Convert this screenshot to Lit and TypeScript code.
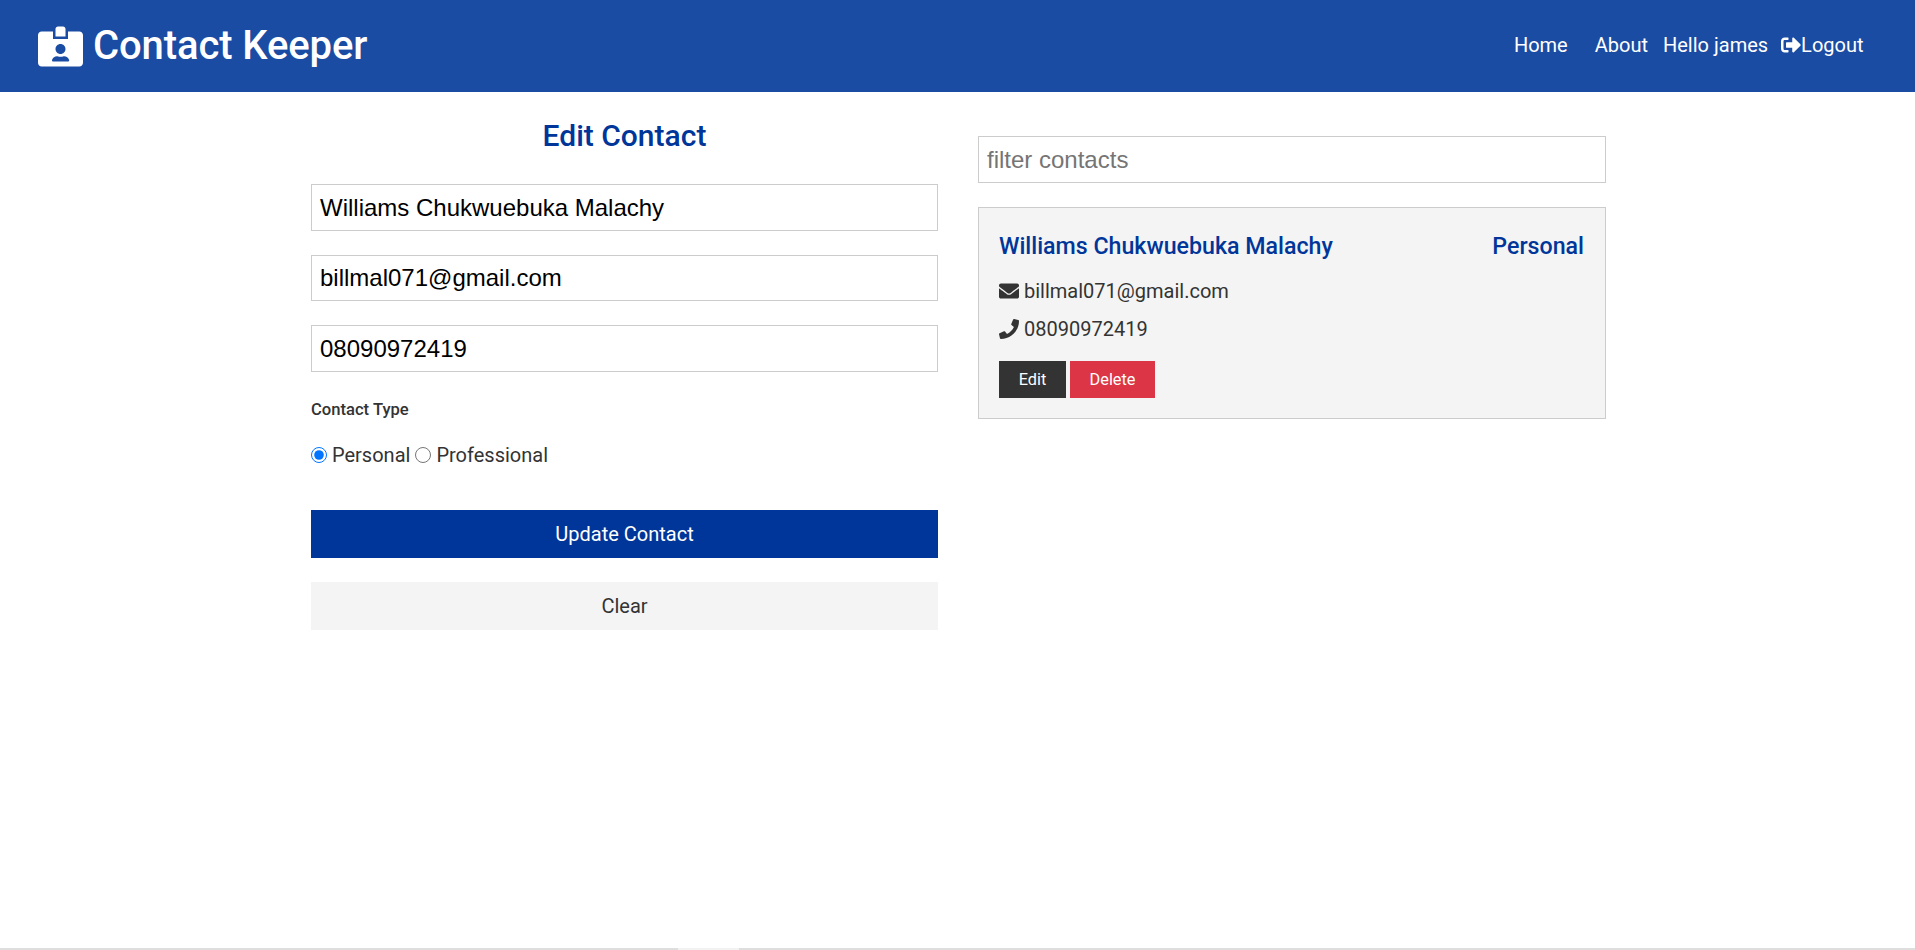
import { LitElement, html, css, svg } from "lit";
import { customElement } from "lit/decorators.js";

const icon = (vb: string, d: string, cls: string) =>
  html`<svg class=${cls} viewBox=${vb} aria-hidden="true">${svg`<path fill="currentColor" d=${d}></path>`}</svg>`;

const ID = "M528 64H384v96H192V64H48C21.5 64 0 85.5 0 112v352c0 26.5 21.5 48 48 48h480c26.5 0 48-21.5 48-48V112c0-26.5-21.5-48-48-48zM288 224c35.3 0 64 28.7 64 64s-28.7 64-64 64-64-28.7-64-64 28.7-64 64-64zm93.3 224H194.7c-10.4 0-18.8-10-15.6-19.8 9-27.8 35.1-48.2 66-48.2h4.1c12.3 5.1 25.7 8 39.8 8s27.6-2.9 39.8-8h4.1c30.8 0 57 20.1 66 48.2 3.3 9.8-5.1 19.8-15.5 19.8zM352 32c0-17.7-14.3-32-32-32h-64c-17.7 0-32 14.3-32 32v96h128V32z";
const OUT = "M497 273L329 441c-15 15-41 4.5-41-17v-96H152c-13.3 0-24-10.7-24-24v-96c0-13.3 10.7-24 24-24h136V88c0-21.4 25.9-32 41-17l168 168c9.3 9.4 9.3 24.6 0 34zM192 436v-40c0-6.6-5.4-12-12-12H96c-17.7 0-32-14.3-32-32V160c0-17.7 14.3-32 32-32h84c6.6 0 12-5.4 12-12V76c0-6.6-5.4-12-12-12H96c-53 0-96 43-96 96v192c0 53 43 96 96 96h84c6.6 0 12-5.4 12-12z";
const MAIL = "M502.3 190.8c3.9-3.1 9.7-.2 9.7 4.7V400c0 26.5-21.5 48-48 48H48c-26.5 0-48-21.5-48-48V195.6c0-5 5.7-7.8 9.7-4.7 22.4 17.4 52.1 39.5 154.1 113.6 21.1 15.4 56.7 47.8 92.2 47.6 35.7.3 72-32.8 92.3-47.6 102-74.1 131.6-96.3 154-113.7zM256 320c23.2.4 56.6-29.2 73.4-41.4 132.7-96.3 142.8-104.7 173.4-128.7 5.8-4.5 9.2-11.5 9.2-18.9v-19c0-26.5-21.5-48-48-48H48C21.5 64 0 85.5 0 112v19c0 7.4 3.4 14.3 9.2 18.9 30.6 23.9 40.7 32.4 173.4 128.7 16.8 12.2 50.2 41.8 73.4 41.4z";
const PHONE = "M493.4 24.6l-104-24c-11.3-2.6-22.9 3.3-27.5 13.9l-48 112c-4.2 9.8-1.4 21.3 6.9 28l60.6 49.6c-36 76.7-98.9 140.5-177.2 177.2l-49.6-60.6c-6.8-8.3-18.2-11.1-28-6.9l-112 48C3.9 366.5-2 378.1.6 389.4l24 104C27.1 504.2 36.7 512 48 512c256.1 0 464-207.5 464-464 0-11.2-7.7-20.9-18.6-23.4z";

@customElement("app-root")
export class AppRoot extends LitElement {
  static styles = css`
    :host {
      display: flex;
      flex-direction: column;
      min-height: 950px;
      font-family: Roboto, "Liberation Sans", sans-serif;
      font-size: 20px;
      line-height: 1.6;
      color: #333;
      background: #fff;
    }
    * { box-sizing: border-box; }
    .nav {
      height: 92px;
      flex: none;
      background: #1b4ca3;
      color: #fff;
      display: flex;
      align-items: center;
      justify-content: space-between;
      padding: 0 51.5px 0 38px;
    }
    .brand { display: flex; align-items: center; gap: 10px; font-size: 40px; font-weight: 500; line-height: 1; margin: 0; letter-spacing: -0.1px; }
    .brand svg { width: 45px; height: 41px; }
    .links { display: flex; align-items: center; padding-bottom: 2px; }
    .links span { display: flex; align-items: center; }
    .home { margin-right: 27px; }
    .about { margin-right: 15px; }
    .hello { margin-right: 13px; }
    .out { width: 20px; height: 20px; }
    .main {
      flex: 1;
      width: 1295px;
      margin-left: 311px;
      display: grid;
      grid-template-columns: 627px 628px;
      column-gap: 40px;
      align-content: start;
      padding-top: 29px;
    }
    h2 { margin: 0; font-size: 30px; font-weight: 500; line-height: 30px; color: #003699; text-align: center; padding-bottom: 33.3px; }
    input.text {
      display: block;
      width: 100%;
      height: 46.6px;
      margin-bottom: 23.9px;
      padding: 0 8px;
      border: 1px solid #ccc;
      font-family: "Liberation Sans", Arial, sans-serif;
      font-size: 24px;
      color: #000;
      background: #fff;
      outline: none;
      border-radius: 0;
    }
    input.text::placeholder { color: #757575; }
    .type { font-size: 16.6px; font-weight: 500; line-height: 26px; padding-top: 1.2px; margin-bottom: 17.5px; }
    .radios { display: flex; align-items: center; height: 30px; margin-bottom: 40px; }
    .radios input { width: 16px; height: 16px; margin: 0; accent-color: #0075ff; }
    .radios label { margin: 0 5px 0 5px; }
    .btn {
      display: block;
      width: 100%;
      height: 48px;
      border: 0;
      margin-bottom: 24px;
      font: inherit;
      cursor: pointer;
    }
    .primary { background: #003699; color: #fff; }
    .light { background: #f4f4f4; color: #333; }
    .right { padding-top: 15.3px; }
    .card {
      background: #f4f4f4;
      border: 1px solid #ccc;
      padding: 20px 21px 20px 20px;
      height: 212px;
    }
    .head { display: flex; justify-content: space-between; color: #003699; font-size: 23.2px; font-weight: 500; line-height: 36px; padding-top: 0.5px; margin-bottom: 7.5px; }
    .row { display: flex; align-items: center; gap: 5px; height: 38px; }
    .row svg { width: 20px; height: 20px; }
    .actions { display: flex; gap: 4px; margin-top: 13px; }
    .sm { height: 37px; border: 0; font-family: inherit; font-size: 16.3px; color: #fff; padding: 0; }
    .edit { width: 67px; background: #333; }
    .del { width: 85px; background: #dc3545; }
    .bar { flex: none; height: 2px; background: #dedede; display: flex; }
    .thumb { width: 61px; margin-left: 678px; background: #f2f2f2; }
  `;

  render() {
    return html`
      <header class="nav">
        <h1 class="brand">${icon("0 0 576 512", ID, "")}<span>Contact Keeper</span></h1>
        <nav class="links">
          <span class="home">Home</span>
          <span class="about">About</span>
          <span class="hello">Hello james</span>
          <span>${icon("0 0 512 512", OUT, "out")}Logout</span>
        </nav>
      </header>
      <main class="main">
        <form>
          <h2>Edit Contact</h2>
          <input class="text" .value=${"Williams Chukwuebuka Malachy"} />
          <input class="text" .value=${"billmal071@gmail.com"} />
          <input class="text" .value=${"08090972419"} />
          <div class="type">Contact Type</div>
          <div class="radios">
            <input type="radio" name="t" id="a" checked /><label for="a">Personal</label>
            <input type="radio" name="t" id="b" /><label for="b">Professional</label>
          </div>
          <button type="button" class="btn primary">Update Contact</button>
          <button type="button" class="btn light">Clear</button>
        </form>
        <section class="right">
          <input class="text" placeholder="filter contacts" />
          <article class="card">
            <div class="head"><span>Williams Chukwuebuka Malachy</span><span>Personal</span></div>
            <div class="row">${icon("0 0 512 512", MAIL, "")}billmal071@gmail.com</div>
            <div class="row">${icon("0 0 512 512", PHONE, "")}08090972419</div>
            <div class="actions">
              <button class="sm edit">Edit</button>
              <button class="sm del">Delete</button>
            </div>
          </article>
        </section>
      </main>
      <div class="bar"><div class="thumb"></div></div>
    `;
  }
}
